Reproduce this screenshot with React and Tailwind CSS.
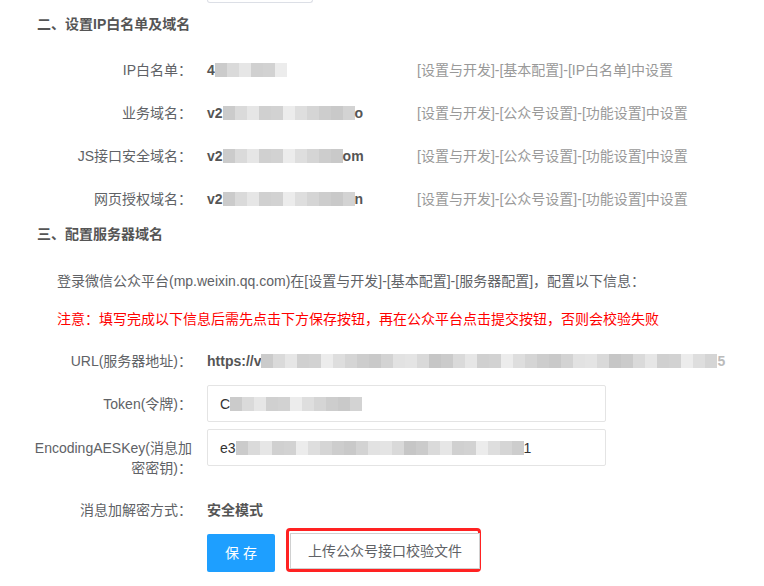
import React from 'react';

// pixel-mosaic used to stand in for the blurred values
const shades = [
    'bg-[#dedede]', 'bg-[#d2d2d2]', 'bg-[#e6e6e6]', 'bg-[#cbcbcb]', 'bg-[#d9d9d9]',
    'bg-[#e2e2e2]', 'bg-[#c9c9c9]', 'bg-[#d5d5d5]', 'bg-[#ececec]', 'bg-[#d0d0d0]',
    'bg-[#dadada]', 'bg-[#c6c6c6]', 'bg-[#e4e4e4]', 'bg-[#d3d3d3]', 'bg-[#cdcdcd]',
];

const Mosaic = ({ cells, h = 'h-[14px]' }) => (
    <span className={`inline-flex ${h} align-middle`}>
        {Array.from({ length: cells }).map((_, i) => (
            <span key={i} className={`w-[12px] h-full ${shades[(i * 7 + 3) % shades.length]}`} />
        ))}
    </span>
);

const sectionOne = [
    { label: 'IP白名单：', head: '4', cells: 6, hint: '[设置与开发]-[基本配置]-[IP白名单]中设置' },
    { label: '业务域名：', head: 'v2', cells: 11, tail: 'o', hint: '[设置与开发]-[公众号设置]-[功能设置]中设置' },
    { label: 'JS接口安全域名：', head: 'v2', cells: 10, tail: 'om', hint: '[设置与开发]-[公众号设置]-[功能设置]中设置' },
    { label: '网页授权域名：', head: 'v2', cells: 11, tail: 'n', hint: '[设置与开发]-[公众号设置]-[功能设置]中设置' },
];

const Label = ({ children, className = '' }) => (
    <div className={`w-[174px] shrink-0 pr-[15px] text-right text-[#606266] ${className}`}>
        {children}
    </div>
);

const App = () => {
    return (
        <div
            className="w-[764px] h-[586px] overflow-hidden bg-white text-[14px] leading-5"
            style={{ fontFamily: '"Liberation Sans", "Noto Sans CJK SC", sans-serif' }}
        >
            <div className="ml-[207px] w-[106px] h-[3px] border-x border-b border-[#dcdfe6] rounded-b-[3px]" />

            <div className="mt-[11px] ml-[37px] font-bold text-[#555]">二、设置IP白名单及域名</div>

            <div className="mt-[14px] pl-[33px]">
                {sectionOne.map((row) => (
                    <div key={row.label} className="flex items-center h-[43px]">
                        <Label>{row.label}</Label>
                        <div className="w-[210px] shrink-0 font-bold text-[#555] whitespace-nowrap flex items-center">
                            {row.head}
                            <Mosaic cells={row.cells} />
                            {row.tail}
                        </div>
                        <div className="text-[#999] whitespace-nowrap">{row.hint}</div>
                    </div>
                ))}
            </div>

            <div className="mt-[4px] ml-[37px] font-bold text-[#555]">三、配置服务器域名</div>

            <div className="mt-[27px] ml-[57px] text-[#606266] whitespace-nowrap">
                登录微信公众平台(mp.weixin.qq.com)在[设置与开发]-[基本配置]-[服务器配置]，配置以下信息：
            </div>
            <div className="mt-[18px] ml-[57px] text-[#ff0000] whitespace-nowrap">
                注意：填写完成以下信息后需先点击下方保存按钮，再在公众平台点击提交按钮，否则会校验失败
            </div>

            <div className="pl-[33px]">
                <div className="mt-[22px] flex items-center h-5">
                    <Label>URL(服务器地址)：</Label>
                    <div className="font-bold text-[#555] whitespace-nowrap flex items-center">
                        https://v
                        <Mosaic cells={38} />
                        <span className="text-[#bbb]">5</span>
                    </div>
                </div>

                <div className="mt-[14px] flex items-center">
                    <Label>Token(令牌)：</Label>
                    <div className="w-[399px] h-[37px] border border-[#e4e4e4] rounded-[2px] pl-3 flex items-center text-[#333]">
                        C
                        <Mosaic cells={11} />
                    </div>
                </div>

                <div className="mt-[7px] flex items-start">
                    <Label className="pt-[9px]">EncodingAESKey(消息加密密钥)：</Label>
                    <div className="w-[399px] h-[37px] border border-[#e4e4e4] rounded-[2px] pl-3 flex items-center text-[#333] whitespace-nowrap">
                        e3
                        <Mosaic cells={24} />
                        1
                    </div>
                </div>

                <div className="mt-[22px] flex items-center h-5">
                    <Label>消息加解密方式：</Label>
                    <div className="font-bold text-[#555]">安全模式</div>
                </div>

                <div className="mt-[8px] flex items-end">
                    <div className="w-[174px] shrink-0" />
                    <button
                        type="button"
                        className="w-[68px] h-[38px] bg-[#1e9fff] text-white rounded-[2px] tracking-[4px] pl-[4px]"
                    >
                        保存
                    </button>
                    <div className="ml-[11px] w-[195px] h-[44px] border-[3px] border-[#f22] rounded-[4px] pt-[2px] pl-px">
                        <div className="w-[190px] h-[36px] border border-[#d0d0d0] bg-white flex items-center justify-center text-[#606266]">
                            上传公众号接口校验文件
                        </div>
                    </div>
                </div>
            </div>
        </div>
    );
};

export default App;
